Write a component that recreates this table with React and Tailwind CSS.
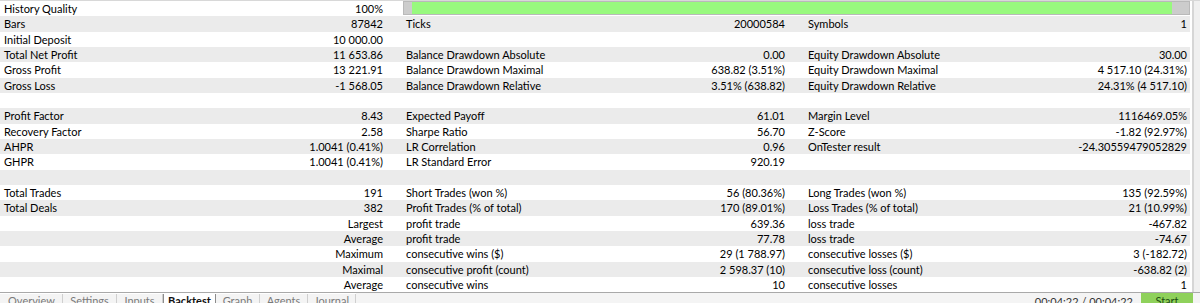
import React from "react";

const rows = [
  [["History Quality", "100%"]],
  [["Bars", "87842"], ["Ticks", "20000584"], ["Symbols", "1"]],
  [["Initial Deposit", "10 000.00"], ["", ""], ["", ""]],
  [["Total Net Profit", "11 653.86"], ["Balance Drawdown Absolute", "0.00"], ["Equity Drawdown Absolute", "30.00"]],
  [["Gross Profit", "13 221.91"], ["Balance Drawdown Maximal", "638.82 (3.51%)"], ["Equity Drawdown Maximal", "4 517.10 (24.31%)"]],
  [["Gross Loss", "-1 568.05"], ["Balance Drawdown Relative", "3.51% (638.82)"], ["Equity Drawdown Relative", "24.31% (4 517.10)"]],
  [["", ""], ["", ""], ["", ""]],
  [["Profit Factor", "8.43"], ["Expected Payoff", "61.01"], ["Margin Level", "1116469.05%"]],
  [["Recovery Factor", "2.58"], ["Sharpe Ratio", "56.70"], ["Z-Score", "-1.82 (92.97%)"]],
  [["AHPR", "1.0041 (0.41%)"], ["LR Correlation", "0.96"], ["OnTester result", "-24.30559479052829"]],
  [["GHPR", "1.0041 (0.41%)"], ["LR Standard Error", "920.19"], ["", ""]],
  [["", ""], ["", ""], ["", ""]],
  [["Total Trades", "191"], ["Short Trades (won %)", "56 (80.36%)"], ["Long Trades (won %)", "135 (92.59%)"]],
  [["Total Deals", "382"], ["Profit Trades (% of total)", "170 (89.01%)"], ["Loss Trades (% of total)", "21 (10.99%)"]],
  [["", "Largest"], ["profit trade", "639.36"], ["loss trade", "-467.82"]],
  [["", "Average"], ["profit trade", "77.78"], ["loss trade", "-74.67"]],
  [["", "Maximum"], ["consecutive wins ($)", "29 (1 788.97)"], ["consecutive losses ($)", "3 (-182.72)"]],
  [["", "Maximal"], ["consecutive profit (count)", "2 598.37 (10)"], ["consecutive loss (count)", "-638.82 (2)"]],
  [["", "Average"], ["consecutive wins", "10"], ["consecutive losses", "1"]],
];

const colCls = ["w-[402px] pl-1 pr-[19px]", "w-[402px] pl-1 pr-[19px]", "w-[386px] pl-1 pr-[3px]"];

const tabs = ["Overview", "Settings", "Inputs", "Backtest", "Graph", "Agents", "Journal"];
const tabW = ["w-[62px]", "w-[54px]", "w-[46px]", "w-[53px]", "w-[44px]", "w-[48px]", "w-[48px]"];

const Cell = ({ c, i }) => (
  <div className={`${colCls[i]} flex items-center justify-between whitespace-nowrap`}>
    <span>{c[0]}</span>
    <span>{c[1]}</span>
  </div>
);

const App = () => {
  return (
    <div
      className="w-[1200px] h-[303px] overflow-hidden bg-white text-[11px] text-black flex flex-col"
      style={{ fontFamily: 'Lato, "Noto Sans", sans-serif' }}
    >
      <div className="flex h-[292px] border-t border-[#d8d8d8]">
        <div className="w-[1190px] flex flex-col">
          {rows.map((r, idx) => (
            <div
              key={idx}
              className={`h-[15.33px] leading-[15px] flex shrink-0 ${idx % 2 === 1 ? "bg-[#ebebeb]" : "bg-white"}`}
            >
              <Cell c={r[0]} i={0} />
              {idx === 0 ? (
                <div className="flex-1 ml-px h-[14px] flex border border-[#b9b9b9] bg-[#cccccc]">
                  <div className="w-[8px]" />
                  <div className="flex-1 bg-[#98f97e]" />
                  <div className="w-[17px]" />
                </div>
              ) : (
                <>
                  <Cell c={r[1]} i={1} />
                  <Cell c={r[2]} i={2} />
                </>
              )}
            </div>
          ))}
        </div>
        <div className="w-[10px] flex">
          <div className="w-[2px]" />
          <div className="w-[2px] bg-[#d6d6d6]" />
          <div className="flex-1 bg-[#f0f0f0]" />
        </div>
      </div>
      <div className="flex-1 border-t border-[#a9a9a9] bg-[#f4f4f4] flex items-start">
        <div className="flex pl-[1px] h-full border-t border-white">
          {tabs.map((t, i) => (
            <div
              key={t}
              className={`${tabW[i]} h-full flex justify-center leading-[14px] whitespace-nowrap ${
                t === "Backtest"
                  ? "bg-white font-bold text-[#111] border-x border-[#8c8c8c]"
                  : "text-[#7a7a7a] border-r border-[#cfcfcf]"
              }`}
            >
              {t}
            </div>
          ))}
        </div>
        <div className="ml-auto flex h-full">
          <div className="pt-[2px] leading-[14px] text-[#333] mr-[8px] whitespace-nowrap">00:04:22 / 00:04:22</div>
          <div className="w-[52px] h-full bg-[#8fd15b] text-[#1d4d12] flex justify-center pt-[1px] leading-[14px] mr-[7px]">
            Start
          </div>
        </div>
      </div>
    </div>
  );
};

export default App;
